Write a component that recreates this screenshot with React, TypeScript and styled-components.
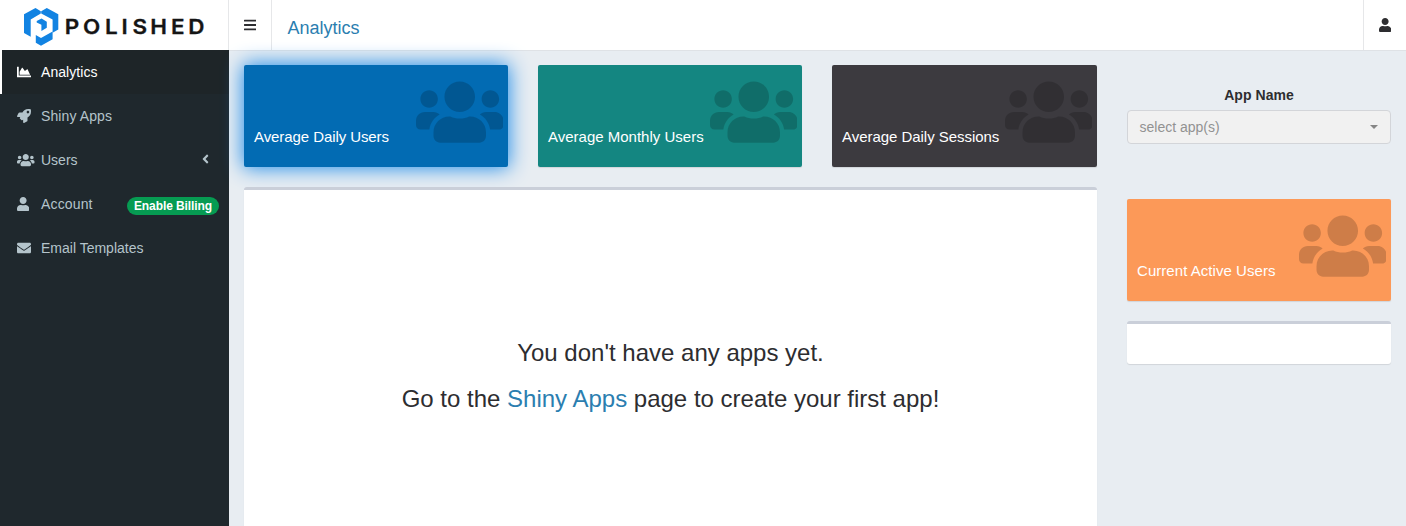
import React from "react";
import styled, { createGlobalStyle } from "styled-components";
import { FaAngleLeft, FaBars, FaChartArea, FaEnvelope, FaUser, FaUsers } from "react-icons/fa";

const GlobalStyle = createGlobalStyle`
  * { box-sizing: border-box; }
  body {
    margin: 0;
    overflow: hidden;
    background: #e8edf2;
    color: #2d2d30;
    font: 14px/20px "Liberation Sans", Arial, sans-serif;
  }
`;

const Page = styled.div`
  display: flex;
  height: 526px;
  overflow: hidden;
`;

const Sidebar = styled.aside`
  width: 229px;
  flex: none;
  display: flex;
  flex-direction: column;
  background: #1f282d;
`;

const Brand = styled.div`
  height: 50px;
  background: #fff;
  border-right: 1px solid #e6e7e9;
`;

const NavItem = styled.a<{ $active?: boolean }>`
  display: flex;
  align-items: center;
  height: 44px;
  padding: 0 10px 0 15px;
  border-left: 2px solid ${(p) => (p.$active ? "#fff" : "transparent")};
  background: ${(p) => (p.$active ? "#1e2528" : "transparent")};
  background-clip: padding-box;
  color: ${(p) => (p.$active ? "#fff" : "#b4c4cb")};
`;

const NavIcon = styled.span<{ $width: number }>`
  display: flex;
  width: 24px;
  svg { flex: none; width: ${(p) => p.$width}px; height: 14px; }
`;

const NavLabel = styled.span<{ $spacing?: number }>`
  flex: 1;
  letter-spacing: ${(p) => p.$spacing ?? 0}px;
`;

const Chevron = styled(FaAngleLeft)`
  width: 7px;
  height: 14px;
  margin: -2px 10px 0 0;
`;

const Badge = styled.span`
  width: 92px;
  height: 18px;
  margin-top: 3px;
  border-radius: 9px;
  background: #069b52;
  color: #fff;
  font-size: 12px;
  font-weight: bold;
  line-height: 18px;
  letter-spacing: -0.08px;
  text-align: center;
`;

const Main = styled.div`
  flex: 1;
  min-width: 0;
  display: flex;
  flex-direction: column;
`;

const Header = styled.header`
  display: flex;
  flex: none;
  height: 51px;
  background: #fff;
  border-bottom: 1px solid #dfe2e6;
`;

const HeaderButton = styled.button<{ $side: "left" | "right" }>`
  width: 43px;
  padding: 0 0 1px;
  display: flex;
  align-items: center;
  justify-content: center;
  border: 0;
  border-${(p) => (p.$side === "left" ? "right" : "left")}: 1px solid #e6e7e9;
  background: none;
  color: #2d2d30;
  svg { height: 14px; width: 12.25px; }
`;

const Title = styled.h1`
  flex: 1;
  margin: 0;
  padding: 3px 0 0 15.4px;
  color: #2b7eb0;
  font-size: 18px;
  font-weight: normal;
  line-height: 50px;
`;

const Content = styled.main`
  flex: 1;
  display: grid;
  grid-template-columns: 853px 264px;
  column-gap: 30px;
  padding: 14px 15px 0;
`;

const Column = styled.section`
  display: flex;
  flex-direction: column;
`;

const StatRow = styled.div`
  display: grid;
  grid-template-columns: 264px 264px 265px;
  gap: 30px;
  margin-bottom: 20px;
`;

const StatCard = styled.div<{ $color: string; $glow?: boolean }>`
  display: flex;
  justify-content: space-between;
  height: 102px;
  padding: 11.6px 5px 0 10px;
  border-radius: 2px;
  background: ${(p) => p.$color};
  color: #fff;
  box-shadow: ${(p) => (p.$glow ? "0 0 20px 1px #1f8ce8" : "0 1px 1px rgba(0, 0, 0, 0.1)")};
`;

const StatLabel = styled.span<{ $spacing?: number }>`
  padding-top: 50.4px;
  font-size: 15px;
  white-space: nowrap;
  letter-spacing: ${(p) => p.$spacing ?? 0}px;
`;

const StatIcon = styled(FaUsers)`
  width: 87.5px;
  height: 70px;
  margin-left: -20px;
  flex: none;
  color: rgba(0, 0, 0, 0.18);
`;

const Panel = styled.div<{ $compact?: boolean }>`
  ${(p) => (p.$compact ? "height: 43px;" : "flex: 1;")}
  border-top: 3px solid #cacfd9;
  border-radius: ${(p) => (p.$compact ? "3px" : "3px 3px 0 0")};
  background: #fff;
  box-shadow: 0 1px 1px rgba(0, 0, 0, 0.1);
  text-align: center;
`;

const Message = styled.p`
  margin: 0 0 20px;
  font-size: 24px;
  line-height: 26px;
  &:first-child { margin-top: 150px; }
`;

const MessageLink = styled.a`
  color: #2b7eb0;
`;

const Filter = styled.div`
  height: 114px;
  margin: 20px 0 0;
`;

const FilterLabel = styled.div`
  margin-bottom: 5px;
  font-weight: bold;
  text-align: center;
  letter-spacing: 0.05px;
`;

const Select = styled.div`
  display: flex;
  align-items: center;
  justify-content: space-between;
  height: 34px;
  padding: 0 12px 0 11.5px;
  border: 1px solid #d3d5d9;
  border-radius: 4px;
  background: #f1f1f1;
  color: #929292;
`;

const Caret = styled.span`
  border: 4px solid transparent;
  border-top-color: #858585;
  border-bottom: 0;
`;

const ActiveUsers = styled.div`
  margin-bottom: 20px;
`;

function RocketIcon() {
  return (
    <svg viewBox="0 0 512 512" fill="currentColor" aria-hidden="true">
      <path d="M505.1 19.1C503.8 13 499 8.2 492.9 6.9 460.7 0 435.5 0 410.4 0 307.2 0 245.3 55.2 199.1 128H94.9c-18.2 0-34.8 10.3-42.9 26.5L2.6 253.3c-8 16 3.6 34.7 21.5 34.7h95.1c-5.9 12.8-11.9 25.5-18 37.7-3.1 6.2-1.9 13.6 3 18.5l63.6 63.6c4.9 4.9 12.3 6.1 18.5 3 12.2-6.1 24.9-12 37.7-17.9V488c0 17.8 18.8 29.4 34.7 21.5l98.7-49.4c16.3-8.1 26.5-24.8 26.5-42.9V312.8c72.6-46.3 128-108.4 128-211.1.1-25.2.1-50.4-6.8-82.6zM400 160c-26.5 0-48-21.5-48-48s21.5-48 48-48 48 21.5 48 48-21.5 48-48 48z" />
    </svg>
  );
}

const LETTER_STRETCH = 1.12;
const letterX = [64.8, 82.9, 105, 121.4, 132.6, 150.3, 171, 188.3]
  .map((x) => (x / LETTER_STRETCH).toFixed(2))
  .join(" ");

function Logo() {
  return (
    <svg width="228" height="50" viewBox="0 0 228 50" role="img" aria-label="Polished">
      <g fill="#1283e2">
        <path d="M24 14.2 35.5 8l5.3 3.3v2.1l-10.1 6v17.4L24 33Z" />
        <path d="M41.2 11.3 46.8 8l11.5 6.2v15.3l-5.7 3.3V19.6l-11.4-6.2Z" />
        <path d="m36.7 21.1 4.9-2.5 5.2 3.2v6l-5.4 3.2v-6.2l-4.7-2.3Z" />
        <path d="m35.8 35 5.2 3 11.6-6.4v7.6L41 45.8l-5.2-3Z" />
      </g>
      <text
        transform={`scale(${LETTER_STRETCH} 1)`}
        x={letterX}
        y="34.3"
        fill="#151515"
        stroke="#151515"
        strokeWidth="0.3"
        fontFamily="Inter, sans-serif"
        fontSize="20"
        fontWeight="600"
      >
        POLISHED
      </text>
    </svg>
  );
}

const cards = [
  { label: "Average Daily Users", color: "#026bb3", glow: true, spacing: -0.08 },
  { label: "Average Monthly Users", color: "#148681", glow: false, spacing: 0 },
  { label: "Average Daily Sessions", color: "#3c3a3f", glow: false, spacing: -0.04 },
];

export default function App() {
  return (
    <>
      <GlobalStyle />
      <Page>
        <Sidebar>
          <Brand><Logo /></Brand>
          <NavItem $active><NavIcon $width={14}><FaChartArea /></NavIcon><NavLabel $spacing={0.07}>Analytics</NavLabel></NavItem>
          <NavItem><NavIcon $width={14}><RocketIcon /></NavIcon><NavLabel $spacing={0.1}>Shiny Apps</NavLabel></NavItem>
          <NavItem><NavIcon $width={17.5}><FaUsers /></NavIcon><NavLabel>Users</NavLabel><Chevron /></NavItem>
          <NavItem><NavIcon $width={12.25}><FaUser /></NavIcon><NavLabel $spacing={0.15}>Account</NavLabel><Badge>Enable Billing</Badge></NavItem>
          <NavItem><NavIcon $width={14}><FaEnvelope /></NavIcon><NavLabel>Email Templates</NavLabel></NavItem>
        </Sidebar>
        <Main>
          <Header>
            <HeaderButton $side="left" aria-label="Toggle sidebar"><FaBars /></HeaderButton>
            <Title>Analytics</Title>
            <HeaderButton $side="right" aria-label="Profile"><FaUser /></HeaderButton>
          </Header>
          <Content>
            <Column>
              <StatRow>
                {cards.map((c) => (
                  <StatCard key={c.label} $color={c.color} $glow={c.glow}>
                    <StatLabel $spacing={c.spacing}>{c.label}</StatLabel>
                    <StatIcon />
                  </StatCard>
                ))}
              </StatRow>
              <Panel>
                <Message>You don't have any apps yet.</Message>
                <Message>Go to the <MessageLink>Shiny Apps</MessageLink> page to create your first app!</Message>
              </Panel>
            </Column>
            <Column>
              <Filter>
                <FilterLabel>App Name</FilterLabel>
                <Select>select app(s)<Caret /></Select>
              </Filter>
              <ActiveUsers>
                <StatCard $color="#fc9958">
                  <StatLabel $spacing={0.05}>Current Active Users</StatLabel>
                  <StatIcon />
                </StatCard>
              </ActiveUsers>
              <Panel $compact />
            </Column>
          </Content>
        </Main>
      </Page>
    </>
  );
}
